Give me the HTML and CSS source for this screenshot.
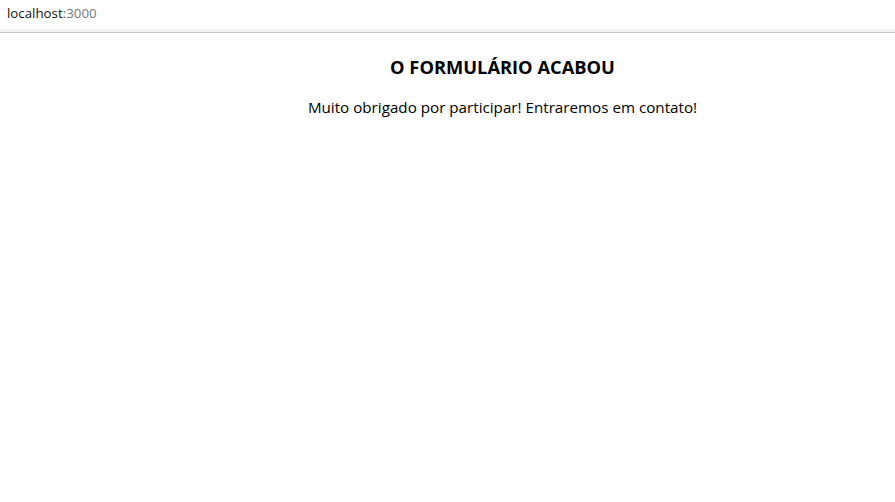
FILE: index.html
```html
<!DOCTYPE html>
<html lang="pt-BR">

<head>
    <meta charset="UTF-8">
    <meta name="viewport" content="width=device-width, initial-scale=1.0">
    <title>Formulário</title>
    <link rel="stylesheet" href="styles.css">
</head>

<body>
    <header class="address-bar">
        <span class="host">localhost</span><span class="port">:3000</span>
    </header>
    <main class="done">
        <h1 class="done-title">O FORMULÁRIO ACABOU</h1>
        <p class="done-text">Muito obrigado por participar! Entraremos em contato!</p>
    </main>
</body>

</html>
```

FILE: styles.css
```css
html,
body {
    margin: 0;
    padding: 0;
    width: 100%;
    height: 100%;
}

body {
    background-color: #fff;
    font-family: 'Open Sans', 'Noto Sans', sans-serif;
    color: #000;
}

.address-bar {
    height: 32px;
    padding: 0 0 3px 7px;
    box-sizing: border-box;
    display: flex;
    align-items: center;
    font-size: 13.3px;
    background-color: #fff;
    border-bottom: 3px solid #f2f2f2;
    box-shadow: 0 1px 0 #c4c4c4;
}

.host {
    color: #111;
}

.port {
    color: #777;
}

.done {
    padding-left: 110px;
    text-align: center;
}

.done-title {
    margin: 0;
    padding-top: 22px;
    font-size: 18.3px;
    font-weight: bold;
}

.done-text {
    margin: 0;
    padding-top: 18px;
    font-size: 15.2px;
}
```
